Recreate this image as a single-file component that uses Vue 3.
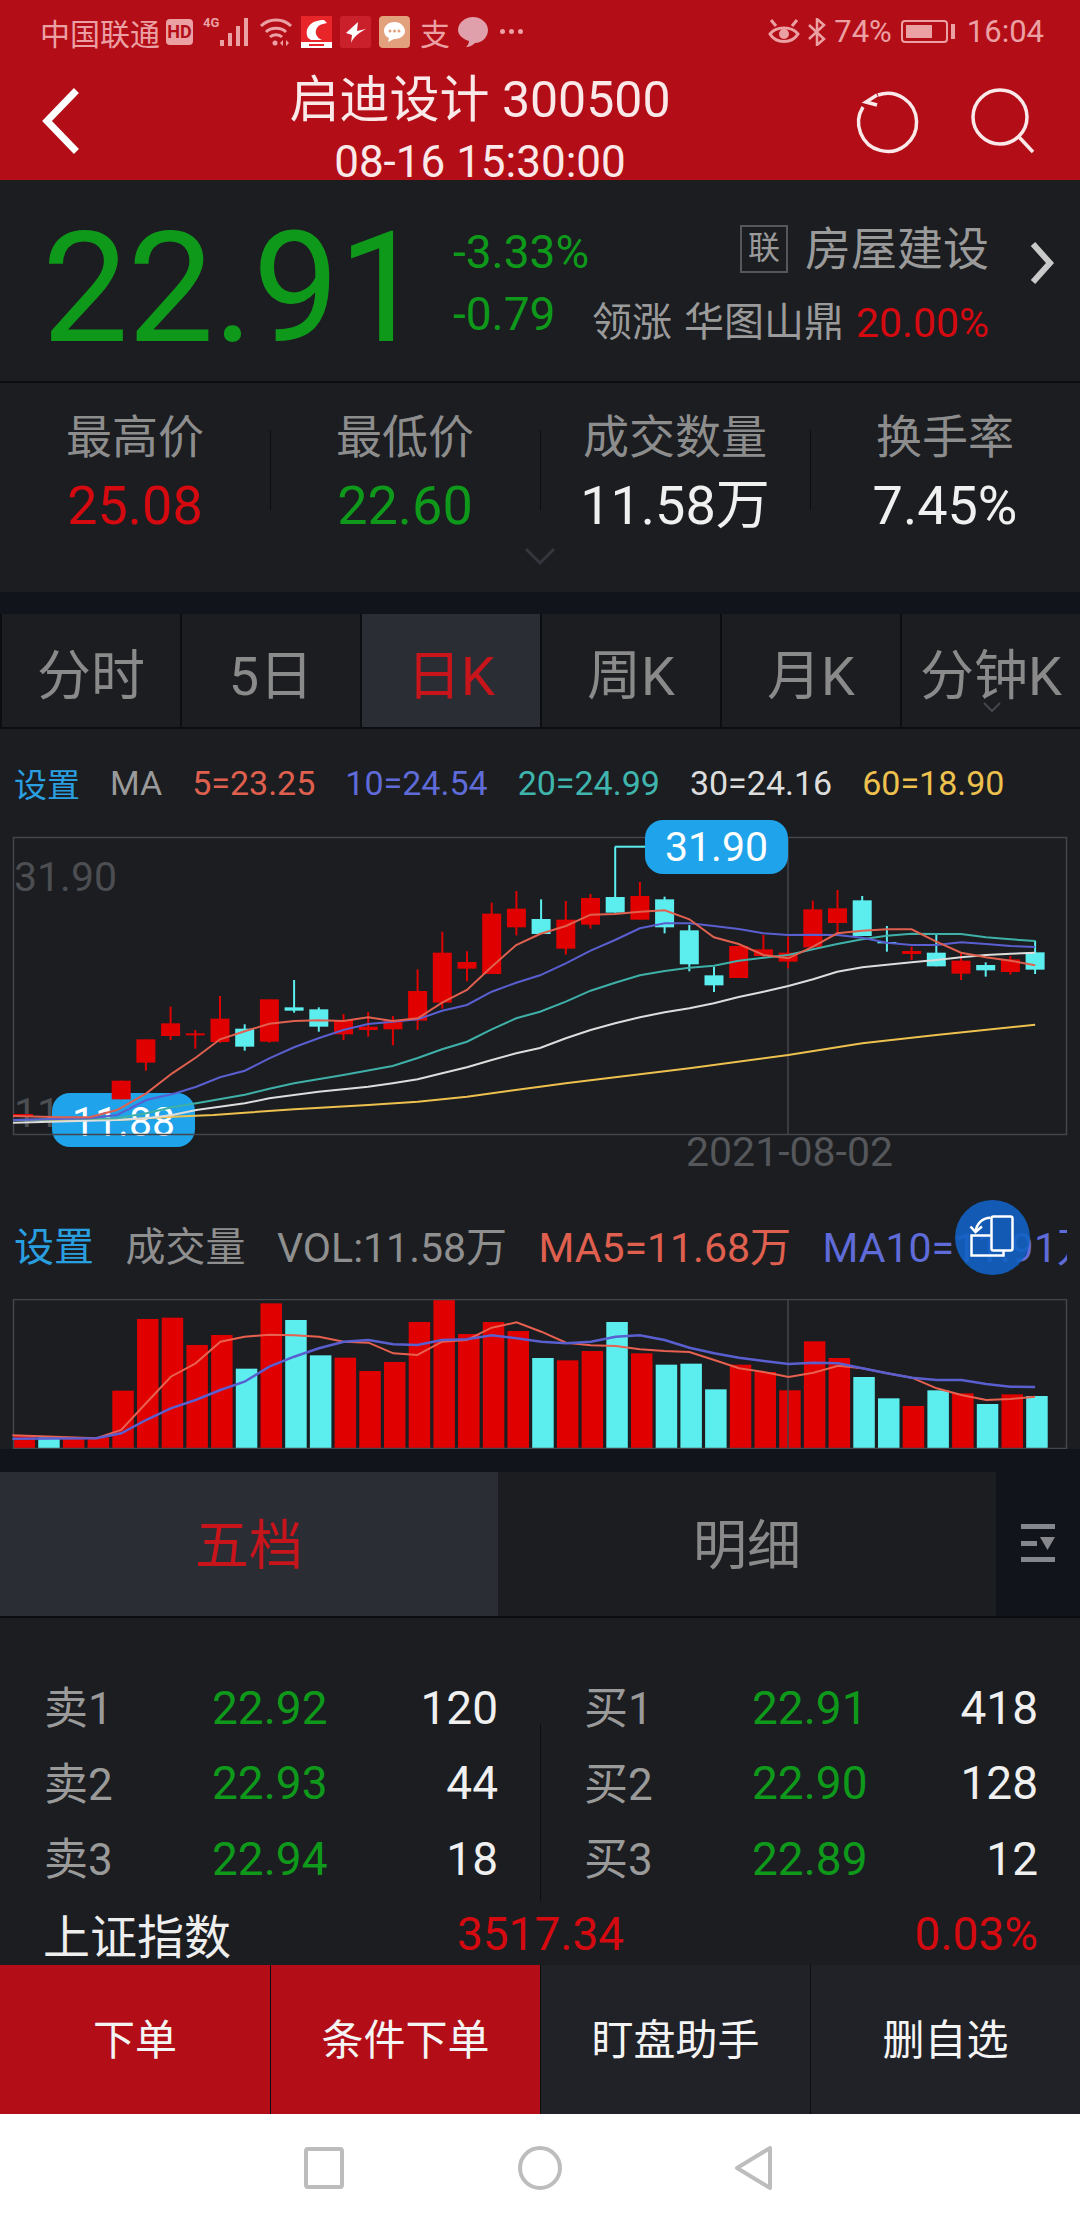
<script setup>
const stats = [
  { label: '最高价', value: '25.08', tone: 'red' },
  { label: '最低价', value: '22.60', tone: 'green' },
  { label: '成交数量', value: '11.58万', tone: 'white' },
  { label: '换手率', value: '7.45%', tone: 'white' },
]
const tabs = ['分时', '5日', '日K', '周K', '月K', '分钟K']
const maItems = [
  { text: '5=23.25', color: '#e0604f' },
  { text: '10=24.54', color: '#5f6bd8' },
  { text: '20=24.99', color: '#3fb5ad' },
  { text: '30=24.16', color: '#dddddd' },
  { text: '60=18.90', color: '#eec14f' },
]
const sells = [
  { label: '卖1', price: '22.92', count: '120' },
  { label: '卖2', price: '22.93', count: '44' },
  { label: '卖3', price: '22.94', count: '18' },
]
const buys = [
  { label: '买1', price: '22.91', count: '418' },
  { label: '买2', price: '22.90', count: '128' },
  { label: '买3', price: '22.89', count: '12' },
]
const actions = [
  { text: '下单', red: true },
  { text: '条件下单', red: true },
  { text: '盯盘助手', red: false },
  { text: '删自选', red: false },
]

// candle values are read off a 3x crop: wick top, body top, body bottom, wick bottom, cyan?
const RED = '#e00000'
const CYAN = '#5ceeee'
const candleRows = [
  [782, 782, 838, 838, 0], [658, 658, 728, 752, 0], [560, 610, 648, 660, 0], [630, 640, 646, 686, 0],
  [528, 596, 666, 668, 0], [613, 626, 680, 692, 1], [538, 538, 665, 668, 0], [480, 562, 572, 578, 1],
  [562, 568, 620, 635, 1], [582, 600, 643, 660, 0], [576, 620, 630, 650, 0], [588, 600, 628, 676, 0],
  [448, 513, 602, 630, 0], [335, 398, 548, 566, 0], [394, 426, 446, 484, 0], [248, 281, 462, 462, 0],
  [213, 266, 322, 346, 0], [238, 297, 342, 342, 1], [243, 299, 386, 404, 0], [222, 234, 314, 326, 0],
  [80, 231, 278, 278, 1], [186, 228, 299, 299, 0], [230, 238, 322, 340, 1], [315, 331, 433, 454, 1],
  [440, 466, 496, 516, 1], [378, 378, 474, 474, 0], [345, 388, 408, 415, 0], [350, 398, 425, 445, 0],
  [242, 268, 382, 382, 0], [210, 265, 309, 340, 0], [228, 241, 348, 348, 1], [318, 366, 370, 395, 1],
  [380, 393, 402, 420, 0], [345, 398, 439, 439, 1], [400, 422, 461, 480, 0], [427, 435, 451, 470, 1],
  [408, 418, 456, 464, 0], [362, 397, 449, 462, 1],
]
const candles = candleRows.map((c, i) => ({
  x: 121.2 + i * 24.7,
  top: c[0] / 3,
  bodyTop: c[1] / 3,
  bodyH: (c[2] - c[1]) / 3,
  bottom: c[3] / 3,
  color: c[4] ? CYAN : RED,
}))

// left = points from the left crop, right = points from the right crop
function linePoints(left, right) {
  const a = left.map(([x, y]) => `${(x / 2.904).toFixed(1)},${(y / 3).toFixed(1)}`)
  const b = right.map(([x, y]) => `${(540 + x / 2.904).toFixed(1)},${(y / 3).toFixed(1)}`)
  return a.concat(b).join(' ')
}

const maLines = [
  {
    color: '#eec14f',
    points: linePoints(
      [[38, 900], [340, 900], [500, 890], [620, 885], [711, 878], [854, 868], [1069, 855], [1213, 845], [1356, 830]],
      [[0, 800], [75, 790], [218, 772], [434, 745], [721, 705], [936, 670], [1151, 645], [1438, 614]],
    ),
  },
  {
    color: '#dddddd',
    points: linePoints(
      [[38, 908], [340, 900], [425, 895], [500, 885], [570, 870], [711, 850], [782, 835], [925, 815], [1069, 800], [1140, 790], [1213, 778], [1284, 760], [1356, 742], [1428, 720], [1499, 700]],
      [[0, 684], [75, 655], [147, 630], [218, 610], [290, 592], [362, 577], [434, 565], [505, 550], [577, 531], [649, 515], [721, 498], [793, 478], [863, 455], [936, 442], [1007, 434], [1079, 427], [1151, 420], [1223, 412], [1295, 405], [1367, 401], [1438, 398]],
    ),
  },
  {
    color: '#3fb0a8',
    points: linePoints(
      [[38, 900], [340, 895], [425, 880], [500, 862], [570, 850], [711, 824], [782, 806], [854, 790], [997, 765], [1140, 738], [1213, 714], [1284, 688], [1356, 665], [1428, 628], [1499, 595]],
      [[0, 575], [75, 545], [147, 512], [218, 488], [290, 466], [362, 453], [434, 443], [505, 437], [577, 422], [649, 413], [721, 405], [793, 388], [863, 372], [936, 358], [1007, 347], [1079, 341], [1151, 342], [1223, 342], [1295, 352], [1367, 358], [1438, 363]],
    ),
  },
  {
    color: '#5a5fd0',
    points: linePoints(
      [[38, 900], [260, 895], [340, 885], [425, 840], [510, 820], [570, 800], [639, 772], [711, 752], [782, 715], [854, 682], [925, 655], [997, 630], [1069, 612], [1140, 605], [1213, 598], [1284, 572], [1356, 555], [1428, 515], [1499, 488]],
      [[0, 466], [75, 430], [147, 392], [218, 360], [290, 325], [362, 310], [434, 310], [505, 318], [577, 327], [649, 340], [721, 345], [793, 344], [863, 345], [936, 353], [1007, 368], [1079, 375], [1151, 375], [1223, 367], [1295, 372], [1367, 378], [1438, 381]],
    ),
  },
  {
    color: '#e0604f',
    points: linePoints(
      [[38, 888], [180, 892], [260, 892], [340, 870], [425, 820], [500, 760], [570, 712], [639, 658], [711, 634], [782, 611], [854, 603], [925, 601], [997, 603], [1069, 592], [1140, 603], [1213, 595], [1284, 548], [1356, 510], [1428, 440], [1499, 375]],
      [[0, 342], [75, 318], [147, 284], [218, 282], [290, 275], [362, 271], [434, 298], [505, 352], [577, 372], [649, 405], [721, 415], [793, 380], [863, 340], [936, 332], [1007, 328], [1079, 328], [1151, 365], [1223, 398], [1295, 412], [1367, 422], [1438, 436]],
    ),
  },
]

// volume bars: bar top in the crop, cyan?
const volRows = [
  [705, 0], [712, 1], [715, 0], [712, 0], [572, 0], [357, 0], [353, 0], [435, 0], [405, 0], [506, 1], [310, 0],
  [360, 1], [466, 1], [473, 0], [513, 0], [486, 0], [366, 0], [293, 0], [402, 0], [366, 0], [393, 0], [474, 1],
  [481, 0], [453, 0], [366, 1], [460, 0], [494, 1], [491, 1], [568, 1], [494, 0], [516, 0], [571, 0], [424, 0],
  [474, 0], [531, 1], [595, 1], [618, 0], [571, 1], [580, 0], [612, 1], [583, 0], [588, 1],
]
const volBars = volRows.map((b, i) => ({
  x: 24.2 + i * 24.7 - 10.7,
  y: b[0] / 3,
  h: (745 - b[0]) / 3,
  color: b[1] ? CYAN : RED,
}))

function volLine(points) {
  return points.map(([x, y]) => `${(x / 1.452).toFixed(1)},${(y / 3).toFixed(1)}`).join(' ')
}
const volMa5 = volLine([[18, 706], [140, 715], [176, 690], [212, 610], [248, 530], [284, 490], [320, 425], [355, 410], [391, 404], [427, 406], [463, 410], [499, 425], [535, 428], [571, 460], [606, 465], [642, 425], [678, 420], [714, 383], [750, 367], [786, 395], [822, 428], [858, 436], [894, 438], [929, 448], [965, 453], [1001, 456], [1037, 480], [1073, 505], [1109, 516], [1145, 531], [1181, 518], [1217, 497], [1252, 505], [1288, 520], [1324, 533], [1360, 565], [1396, 585], [1432, 600], [1467, 597], [1503, 590]])
const volMa10 = volLine([[18, 716], [140, 715], [176, 700], [212, 660], [248, 625], [284, 600], [320, 570], [355, 545], [391, 500], [427, 470], [463, 445], [499, 425], [535, 420], [571, 433], [606, 435], [642, 420], [678, 418], [714, 406], [750, 415], [786, 425], [822, 430], [858, 425], [894, 410], [929, 406], [965, 420], [1001, 443], [1037, 460], [1073, 473], [1109, 483], [1145, 492], [1181, 488], [1217, 490], [1252, 505], [1288, 520], [1324, 533], [1360, 540], [1396, 540], [1432, 552], [1467, 560], [1503, 561]])
</script>

<template>
  <div class="phone">
    <header class="top">
      <div class="status">
        <span class="carrier">中国联通</span>
        <span class="hd">HD</span>
        <span class="net">4G</span>
        <svg class="signal" width="30" height="28" viewBox="0 0 30 28">
          <rect x="0" y="22" width="4" height="6" /><rect x="8" y="15" width="4" height="13" />
          <rect x="16" y="8" width="4" height="20" /><rect x="24" y="0" width="4" height="28" />
        </svg>
        <svg class="wifi" width="34" height="32" viewBox="0 0 34 32" fill="none" stroke="#eba0a4" stroke-width="3">
          <path d="M2 10c8-8 22-8 30 0" /><path d="M7 16c5-5 15-5 20 0" /><path d="M11 21c3-3 9-3 12 0" />
          <circle cx="16" cy="27" r="2.5" fill="#eba0a4" stroke="none" />
          <path d="M24 24l-3 3 3 3zM27 24l3 3-3 3z" fill="#eba0a4" stroke="none" />
        </svg>
        <svg class="app" width="31" height="32" viewBox="0 0 31 32">
          <rect width="31" height="32" fill="#e8262a" />
          <rect y="26" width="31" height="6" fill="#ffffff" />
          <path d="M7 22C3 13 9 4 23 4l3 3-4 1c-5 1-8 5-7 10 1 3 3 5 6 6H10z" fill="#ffffff" />
          <rect x="8" y="28" width="15" height="2" fill="#e8262a" />
        </svg>
        <svg class="app" width="31" height="32" viewBox="0 0 31 32">
          <rect width="31" height="32" rx="3" fill="#c9202c" />
          <path d="M18 6L6 17l6 2-1 8c2-5 6-9 15-14l-9 2z" fill="#ffffff" />
        </svg>
        <svg class="app" width="31" height="32" viewBox="0 0 31 32">
          <rect width="31" height="32" rx="4" fill="#e2a17c" />
          <path d="M15.5 6C9 6 5 10 5 15c0 3 2 6 5 7l-1 4 6-3h1c6 0 10-4 10-8s-4-9-10.500-9z" fill="#ffffff" />
          <circle cx="11" cy="15" r="1.500" fill="#e2a17c" /><circle cx="15.500" cy="15" r="1.500" fill="#e2a17c" /><circle cx="20" cy="15" r="1.500" fill="#e2a17c" />
        </svg>
        <span class="zhi">支</span>
        <svg class="bubble" width="30" height="32" viewBox="0 0 30 32">
          <path d="M15 1c8 0 15 6 15 13s-6 13-13 13c-2 2-5 4-9 4 2-2 3-4 3-6C5 23 0 19 0 14 0 7 7 1 15 1z" fill="#e0a0ab" />
        </svg>
        <span class="dots"><i></i><i></i><i></i></span>
        <span class="status-right">
          <svg width="32" height="26" viewBox="0 0 32 26" fill="none" stroke="#eba0a4" stroke-width="3">
            <path d="M2 15c6-8 22-8 28 0-6 10-22 10-28 0z" /><circle cx="16" cy="15" r="5" fill="#eba0a4" stroke="none" />
            <path d="M3 1l5 6M29 1l-5 6" />
          </svg>
          <svg width="20" height="28" viewBox="0 0 20 28" fill="none" stroke="#eba0a4" stroke-width="2.500">
            <path d="M2 7l15 14-7 6V1l7 6L2 21" />
          </svg>
          <span class="pct">74%</span>
          <span class="battery"><b></b></span>
          <span class="clock">16:04</span>
        </span>
      </div>
      <div class="nav">
        <svg width="80" height="120" viewBox="0 0 80 120" fill="none" stroke="#fff" stroke-width="7" stroke-linecap="square">
          <path d="M74 33L47 61l27 28" />
        </svg>
        <div class="title">
          <div class="name">启迪设计 300500</div>
          <div class="stamp">08-16 15:30:00</div>
        </div>
        <div class="nav-icons">
          <svg width="70" height="70" viewBox="0 0 70 70" fill="none" stroke="#fbe9ea" stroke-width="3.500">
            <path d="M12 19a29 29 0 1 0 15-12" /><path d="M26 7L15 14l11 3" />
          </svg>
          <svg width="75" height="75" viewBox="0 0 75 75" fill="none" stroke="#fbe9ea" stroke-width="3.500">
            <circle cx="35" cy="32" r="27" /><path d="M54 52l14 15" />
          </svg>
        </div>
      </div>
    </header>

    <section class="quote">
      <div class="last">22.91</div>
      <div class="change">
        <span>-3.33%</span>
        <span>-0.79</span>
      </div>
      <div class="sector">
        <div class="sector-top"><span class="lian">联</span><span class="sector-name">房屋建设</span></div>
        <div class="sector-lead"><span>领涨</span><span>华图山鼎</span><em>20.00%</em></div>
      </div>
      <svg class="more" width="30" height="44" viewBox="0 0 30 44" fill="none" stroke="#c9c9c9" stroke-width="6">
        <path d="M6 3l17 19L6 41" />
      </svg>
    </section>

    <section class="stats">
      <div v-for="item in stats" :key="item.label" class="stat">
        <div class="stat-label">{{ item.label }}</div>
        <div :class="['stat-value', item.tone]">{{ item.value }}</div>
      </div>
      <svg class="stats-arrow" width="32" height="18" viewBox="0 0 32 18" fill="none" stroke="#33363c" stroke-width="3">
        <path d="M2 2l14 14L30 2" />
      </svg>
    </section>

    <div class="band"></div>

    <nav class="tabs">
      <div v-for="tab in tabs" :key="tab" :class="['tab', { active: tab === '日K' }]">
        {{ tab }}
        <svg v-if="tab === '分钟K'" class="tab-caret" width="18" height="10" viewBox="0 0 18 10" fill="none" stroke="#44474d" stroke-width="2">
          <path d="M1 1l8 8 8-8" />
        </svg>
      </div>
    </nav>

    <div class="ma-row">
      <span class="set">设置</span>
      <span class="ma-name">MA</span>
      <span v-for="ma in maItems" :key="ma.text" :style="{ color: ma.color }">{{ ma.text }}</span>
    </div>

    <div class="kline">
      <div class="axis-top">31.90</div>
      <div class="axis-low">11.88</div>
      <div class="pill pill-low">11.88</div>
      <svg class="canvas" width="1080" height="340" viewBox="0 0 1080 340">
        <rect x="13.500" y="17.500" width="1053" height="297" fill="none" stroke="#44464b" stroke-width="1.500" />
        <line x1="788" y1="17" x2="788" y2="314" stroke="#44464b" stroke-width="1.500" />
        <rect x="13" y="294" width="20" height="3" fill="#e00000" />
        <g v-for="(c, i) in candles" :key="i">
          <line :x1="c.x" :x2="c.x" :y1="c.top" :y2="c.bottom" :stroke="c.color" stroke-width="2" />
          <rect :x="c.x - 9.500" :y="c.bodyTop" width="19" :height="c.bodyH" :fill="c.color" />
        </g>
        <polyline points="615,26.700 645,26.700" fill="none" stroke="#5ceeee" stroke-width="2" />
        <polyline v-for="ma in maLines" :key="ma.color" :points="ma.points" fill="none" :stroke="ma.color" stroke-width="2" />
      </svg>
      <div class="pill pill-high">31.90</div>
      <div class="date">2021-08-02</div>
    </div>

    <div class="vol-row">
      <div class="vol-clip">
        <span class="set">设置</span>
        <span class="vol-name">成交量</span>
        <span class="vol-name">VOL:11.58万</span>
        <span class="vol-ma5">MA5=11.68万</span>
        <span class="vol-ma10">MA10=11.91万</span>
      </div>
      <div class="float-btn">
        <svg width="52" height="52" viewBox="0 0 52 52" fill="none" stroke="#fff" stroke-width="2.500">
          <rect x="24.500" y="4.500" width="21" height="34" rx="2" />
          <path d="M23.500 23.500H4.500v20h32v-5" />
          <path d="M23.500 5.800C15 6 9.500 12 8.500 20" />
          <path d="M3.500 14.500l5 5.500 6.500-5.500" />
        </svg>
      </div>
    </div>

    <div class="volume">
      <svg class="canvas" width="1080" height="150" viewBox="0 0 1080 150">
        <g transform="translate(0 -99)">
          <rect v-for="(b, i) in volBars" :key="i" :x="b.x" :y="b.y" width="21.500" :height="b.h" :fill="b.color" />
          <rect x="13.500" y="99.500" width="1053" height="149" fill="none" stroke="#44464b" stroke-width="1.500" />
          <line x1="788" y1="99" x2="788" y2="248" stroke="#44464b" stroke-width="1.500" />
          <polyline :points="volMa5" fill="none" stroke="#e8604f" stroke-width="2" />
          <polyline :points="volMa10" fill="none" stroke="#5a5fd0" stroke-width="2.500" />
        </g>
      </svg>
    </div>

    <div class="band band-low"></div>

    <div class="book-tabs">
      <div class="book-tab active">五档</div>
      <div class="book-tab">明细</div>
      <div class="book-menu">
        <svg width="36" height="40" viewBox="0 0 36 40" fill="#85878c">
          <rect x="1" y="2" width="34" height="5" /><rect x="1" y="19" width="16" height="5" />
          <rect x="1" y="35" width="34" height="5" /><path d="M20 15h15l-7.500 13z" />
        </svg>
      </div>
    </div>

    <section class="book">
      <div class="book-grid">
        <div class="side">
          <div v-for="row in sells" :key="row.label" class="level">
            <span class="level-label">{{ row.label }}</span>
            <span class="level-price">{{ row.price }}</span>
            <span class="level-count">{{ row.count }}</span>
          </div>
        </div>
        <div class="side side-buy">
          <div v-for="row in buys" :key="row.label" class="level">
            <span class="level-label">{{ row.label }}</span>
            <span class="level-price">{{ row.price }}</span>
            <span class="level-count">{{ row.count }}</span>
          </div>
        </div>
      </div>
      <div class="index-row">
        <span class="index-name">上证指数</span>
        <span class="index-val">3517.34</span>
        <span class="index-pct">0.03%</span>
      </div>
    </section>

    <div class="actions">
      <div v-for="a in actions" :key="a.text" :class="['action', { red: a.red }]">{{ a.text }}</div>
    </div>

    <footer class="softkeys">
      <svg width="42" height="42" viewBox="0 0 42 42" fill="none" stroke="#bdbdbd" stroke-width="4">
        <rect x="3" y="2" width="36" height="38" rx="2" />
      </svg>
      <svg width="46" height="46" viewBox="0 0 46 46" fill="none" stroke="#bdbdbd" stroke-width="4">
        <circle cx="23" cy="23" r="20" />
      </svg>
      <svg width="40" height="46" viewBox="0 0 40 46" fill="none" stroke="#bdbdbd" stroke-width="4" stroke-linejoin="round">
        <path d="M36 3v40L3 23z" />
      </svg>
    </footer>
  </div>
</template>

<style>
html, body { margin: 0; background: #1b1d21; }
</style>

<style scoped>
.phone {
  width: 1080px;
  height: 2220px;
  overflow: hidden;
  background: #1b1d21;
  font-family: Roboto, "Noto Sans CJK SC", sans-serif;
  color: #fff;
}
.top { height: 180px; background: #b30e17; overflow: hidden; }
.status {
  height: 60px;
  padding: 3px 36px 0 40px;
  box-sizing: border-box;
  display: flex;
  align-items: center;
  color: #eba0a4;
  font-size: 30px;
}
.carrier { width: 126px; }
.hd {
  width: 27px;
  height: 26px;
  border-radius: 4px;
  background: #eba0a4;
  color: #b30e17;
  font-size: 18px;
  font-weight: 700;
  line-height: 26px;
  text-align: center;
}
.net { width: 16px; margin: -18px 0 0 10px; font-size: 13px; font-weight: 700; }
.signal { fill: #eba0a4; margin-left: 1px; }
.wifi { margin-left: 9px; }
.app { margin-left: 8px; }
.zhi { margin-left: 10px; font-size: 30px; }
.bubble { margin-left: 8px; }
.dots { display: flex; gap: 4px; margin-left: 12px; }
.dots i { width: 5px; height: 5px; border-radius: 50%; background: #eba0a4; }
.status-right { margin-left: auto; display: flex; align-items: center; gap: 7px; font-size: 31px; }
.pct { margin: 0 2px 0 0; }
.battery {
  width: 47px;
  height: 23px;
  box-sizing: border-box;
  border: 2px solid #eba0a4;
  border-radius: 4px;
  padding: 3px;
  position: relative;
  margin-right: 12px;
}
.battery b { display: block; width: 72%; height: 100%; background: #eba0a4; }
.battery::after {
  content: '';
  position: absolute;
  right: -9px;
  top: 2px;
  width: 4px;
  height: 15px;
  background: #eba0a4;
}
.nav {
  height: 120px;
  display: grid;
  grid-template-columns: 80px 800px 200px;
  color: #fbe9ea;
}
.title { text-align: center; }
.name { font-size: 50px; line-height: 62px; margin-top: 9px; }
.stamp { font-size: 44px; line-height: 36px; margin-top: 13px; }
.nav-icons { position: relative; }
.nav-icons svg { position: absolute; }
.nav-icons svg:first-child { left: -29px; top: 28px; }
.nav-icons svg:last-child { left: 85px; top: 25px; }

.quote {
  height: 203px;
  box-sizing: border-box;
  border-bottom: 2px solid #0c0d10;
  padding-left: 42px;
  display: flex;
  position: relative;
}
.last {
  width: 411px;
  font-size: 154px;
  line-height: 180px;
  margin-top: 19px;
  color: #0f991a;
  letter-spacing: -1px;
}
.change {
  width: 140px;
  padding-top: 49px;
  display: flex;
  flex-direction: column;
  gap: 16px;
  color: #0f991a;
  font-size: 46px;
  line-height: 46px;
}
.sector {
  width: 396px;
  padding-top: 45px;
  color: #9a9a9a;
}
.sector-top { display: flex; justify-content: flex-end; align-items: center; gap: 17px; height: 48px; }
.lian {
  width: 48px;
  height: 48px;
  box-sizing: border-box;
  border: 2px solid #55575c;
  font-size: 32px;
  line-height: 42px;
  text-align: center;
}
.sector-name { font-size: 46px; line-height: 48px; }
.sector-lead {
  margin-top: 27px;
  display: flex;
  justify-content: flex-end;
  gap: 12px;
  font-size: 40px;
  line-height: 46px;
  white-space: nowrap;
}
.sector-lead em { font-style: normal; color: #d40a10; font-size: 41px; }
.more { position: absolute; left: 1027px; top: 61px; }

.stats {
  height: 209px;
  display: grid;
  grid-template-columns: repeat(4, 270px);
  position: relative;
}
.stat { text-align: center; position: relative; padding-top: 24px; }
.stat + .stat::before {
  content: '';
  position: absolute;
  left: 0;
  top: 47px;
  height: 80px;
  width: 1px;
  background: #0c0d10;
}
.stat-label { font-size: 46px; line-height: 60px; color: #8d8d8d; }
.stat-value { font-size: 54px; line-height: 70px; margin-top: 4px; }
.red { color: #d40a10; }
.green { color: #0f991a; }
.white { color: #f0f0f0; }
.stats-arrow { position: absolute; left: 524px; top: 164px; }

.band { height: 22px; background: #12141b; }
.band-low { height: 23px; }
.tabs {
  height: 115px;
  box-sizing: border-box;
  border-bottom: 2px solid #0c0d10;
  display: grid;
  grid-template-columns: repeat(6, 180px);
  grid-template-rows: 113px;
}
.tab {
  box-sizing: border-box;
  border-left: 2px solid #0c0d10;
  padding-top: 2px;
  display: flex;
  align-items: center;
  justify-content: center;
  font-size: 54px;
  color: #8a8a8a;
  position: relative;
}
.tab.active { background: #2b2d35; color: #c8141b; }
.tab-caret { position: absolute; left: 81px; top: 88px; }

.ma-row {
  height: 91px;
  box-sizing: border-box;
  padding: 16px 0 0 14px;
  display: flex;
  align-items: center;
  gap: 30px;
  font-size: 34px;
  white-space: nowrap;
}
.set { color: #2a9fe0; }
.ma-row .set { font-size: 33px; }
.ma-name { color: #9a9a9a; }

.kline {
  height: 340px;
  position: relative;
}
.canvas { display: block; position: absolute; left: 0; top: 0; }
.volume { height: 150px; position: relative; }
.axis-top, .axis-low {
  position: absolute;
  left: 14px;
  font-size: 41px;
  line-height: 46px;
  color: #4c4e52;
}
.axis-top { top: 34px; }
.axis-low { top: 270px; }
.pill {
  position: absolute;
  width: 143px;
  height: 54px;
  border-radius: 18px;
  background: #1fa3ea;
  font-size: 41px;
  line-height: 54px;
  text-align: center;
}
.pill-high { left: 645px; top: 0; }
.pill-low { left: 52px; top: 273px; line-height: 58px; }
.date {
  position: absolute;
  left: 686px;
  top: 309px;
  font-size: 41px;
  line-height: 46px;
  color: #55575b;
}

.vol-row {
  height: 139px;
  position: relative;
}
.vol-clip {
  width: 1067px;
  overflow: hidden;
  box-sizing: border-box;
  padding: 65px 0 0 14px;
  display: flex;
  gap: 31.5px;
  font-size: 41px;
  line-height: 46px;
  white-space: nowrap;
}
.vol-clip .set { font-size: 40px; }
.vol-clip .vol-name:nth-child(2) { font-size: 40px; }
.vol-name { color: #8f8f8f; }
.vol-ma5 { color: #e0604f; }
.vol-ma10 { color: #5f6bd8; }
.float-btn {
  position: absolute;
  left: 955px;
  top: 40px;
  width: 75px;
  height: 75px;
  border-radius: 50%;
  background: rgba(18, 98, 196, 0.9);
  display: flex;
  align-items: center;
  justify-content: center;
}

.book-tabs {
  height: 146px;
  box-sizing: border-box;
  border-bottom: 2px solid #0c0d10;
  display: grid;
  grid-template-columns: 498px 498px 84px;
  grid-template-rows: 144px;
}
.book-tab {
  text-align: center;
  font-size: 54px;
  line-height: 150px;
  color: #8a8a8a;
}
.book-tab.active { background: #2b2d35; color: #c8141b; }
.book-menu {
  background: #12141b;
  padding: 50px 0 0 24px;
  box-sizing: border-box;
}

.book {
  height: 347px;
  overflow: hidden;
  box-sizing: border-box;
  padding-top: 52px;
}
.book-grid { display: grid; grid-template-columns: 540px 540px; }
.side { padding: 0 42px 0 44px; }
.side-buy { position: relative; }
.side-buy::before {
  content: '';
  position: absolute;
  left: 0;
  top: 54px;
  bottom: -4px;
  width: 1px;
  background: #0c0d10;
}
.level {
  height: 75.5px;
  display: grid;
  grid-template-columns: 168px 1fr auto;
  align-items: center;
  font-size: 46px;
}
.level-label { color: #9a9a9a; font-size: 44px; margin-top: -5px; }
.level-price { color: #0f991a; }
.level-count { color: #f0f0f0; }
.index-row {
  padding: 0 42px 0 43px;
  height: 74px;
  display: grid;
  grid-template-columns: 1fr auto 1fr;
  align-items: center;
  font-size: 46px;
}
.index-name { color: #eeeeee; font-size: 47px; }
.index-val { color: #d40a10; }
.index-pct { color: #d40a10; text-align: right; }

.actions {
  height: 149px;
  display: grid;
  grid-template-columns: repeat(4, 270px);
}
.action {
  background: #202228;
  text-align: center;
  font-size: 42px;
  line-height: 151px;
  color: #f4f4f4;
  overflow: hidden;
}
.action + .action { border-left: 1px solid #0c0d10; }
.action.red { background: #b30e17; }
.softkeys {
  height: 107px;
  background: #fff;
  display: flex;
  align-items: center;
  padding: 0 306px 0 303px;
  justify-content: space-between;
}
</style>
